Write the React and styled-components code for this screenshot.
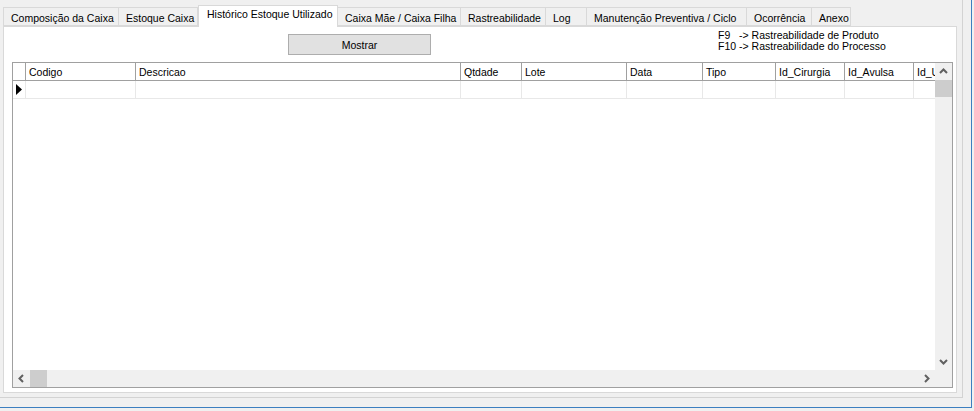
import React from "react";
import styled, { createGlobalStyle } from "styled-components";

const GlobalStyle = createGlobalStyle`
  html, body {
    margin: 0;
    padding: 0;
    background: #f0f0f0;
  }
  body {
    font-family: "Liberation Sans", Arial, sans-serif;
    font-size: 10.5px;
    color: #000;
  }
  * {
    box-sizing: border-box;
  }
`;

const Window = styled.div`
  width: 972px;
  height: 408px;
  border-right: 1px solid #3c7fc0;
  border-bottom: 1px solid #3c7fc0;
  background: #f0f0f0;
`;

const Frame = styled.div`
  width: 963px;
  height: 398px;
  padding: 5px 0 0 3px;
  border-right: 1px solid #d3d3d3;
  border-bottom: 1px solid #d3d3d3;
`;

const TabStrip = styled.div`
  display: flex;
  align-items: flex-end;
  height: 21px;
`;

const Tab = styled.div`
  width: ${(p) => p.$w}px;
  height: ${(p) => (p.$active ? 22 : 19)}px;
  margin-bottom: ${(p) => (p.$active ? -1 : 0)}px;
  padding: ${(p) => (p.$active ? "2px 0 0 8px" : "4px 0 0 7px")};
  background: ${(p) => (p.$active ? "#fff" : "#f0f0f0")};
  border: 1px solid #d9d9d9;
  border-bottom: ${(p) => (p.$active ? "none" : "1px solid #d9d9d9")};
  border-left: ${(p) => (p.$first || p.$active ? "1px solid #d9d9d9" : "none")};
  position: relative;
  z-index: ${(p) => (p.$active ? 1 : 0)};
  white-space: nowrap;
  overflow: hidden;
`;

const Panel = styled.div`
  width: 954px;
  height: 367px;
  background: #fff;
  border: 1px solid #d9d9d9;
  padding: 0 0 0 8px;
`;

const TopBar = styled.div`
  display: flex;
  align-items: flex-start;
  height: 35px;
`;

const Button = styled.div`
  width: 143px;
  height: 21px;
  margin: 7px 0 0 276px;
  background: #e1e1e1;
  border: 1px solid #adadad;
  display: flex;
  align-items: center;
  justify-content: center;
`;

const Hints = styled.div`
  margin: 3px 0 0 287px;
  line-height: 11px;
  white-space: pre;
`;

const Grid = styled.div`
  width: 941px;
  height: 326px;
  border: 1px solid #a0a0a0;
  display: flex;
  flex-direction: column;
`;

const Main = styled.div`
  flex: 1;
  display: flex;
  min-height: 0;
`;

const Columns = styled.div`
  width: 922px;
  overflow: hidden;
`;

const Row = styled.div`
  display: flex;
  height: 18px;
  border-bottom: 1px solid ${(p) => (p.$header ? "#a0a0a0" : "#e8e8e8")};
`;

const Cell = styled.div`
  flex: 0 0 ${(p) => p.$w}px;
  height: 100%;
  border-right: 1px solid ${(p) => (p.$header ? "#a0a0a0" : "#e8e8e8")};
  padding-left: 3px;
  display: flex;
  align-items: center;
  white-space: nowrap;
  overflow: hidden;
`;

const Indicator = styled.div`
  flex: 0 0 13px;
  height: 100%;
  border-right: 1px solid ${(p) => (p.$header ? "#a0a0a0" : "#e8e8e8")};
  display: flex;
  align-items: center;
  justify-content: center;
`;

const VScroll = styled.div`
  width: 17px;
  background: #f0f0f0;
  display: flex;
  flex-direction: column;
`;

const HScroll = styled.div`
  height: 17px;
  background: #f0f0f0;
  display: flex;
`;

const Arrow = styled.div`
  flex: 0 0 17px;
  height: 17px;
  display: flex;
  align-items: center;
  justify-content: center;
`;

const Thumb = styled.div`
  flex: 0 0 17px;
  height: 17px;
  background: #cdcdcd;
`;

const Spacer = styled.div`
  flex: 1;
`;

const Corner = styled.div`
  flex: 0 0 17px;
`;

const Chevron = ({ dir }) => {
  const pts = {
    up: "5,10 8.5,6.5 12,10",
    down: "5,7 8.5,10.5 12,7",
    left: "10,5 6.5,8.5 10,12",
    right: "7,5 10.5,8.5 7,12",
  }[dir];
  return (
    <svg width="17" height="17" viewBox="0 0 17 17">
      <polyline points={pts} fill="none" stroke="#606060" strokeWidth="2" />
    </svg>
  );
};

const tabs = [
  ["Composição da Caixa", 116],
  ["Estoque Caixa", 79],
  ["Histórico Estoque Utilizado", 140],
  ["Caixa Mãe / Caixa Filha", 123],
  ["Rastreabilidade", 85],
  ["Log", 41],
  ["Manutenção Preventiva / Ciclo", 160],
  ["Ocorrência", 65],
  ["Anexo", 39],
];

const columns = [
  ["Codigo", 110],
  ["Descricao", 325],
  ["Qtdade", 61],
  ["Lote", 105],
  ["Data", 76],
  ["Tipo", 73],
  ["Id_Cirurgia", 69],
  ["Id_Avulsa", 69],
  ["Id_Usuario", 69],
];

export default function App() {
  return (
    <>
      <GlobalStyle />
      <Window>
        <Frame>
          <TabStrip>
            {tabs.map(([label, w], i) => (
              <Tab key={label} $w={w} $first={i === 0} $active={i === 2}>
                {label}
              </Tab>
            ))}
          </TabStrip>
          <Panel>
            <TopBar>
              <Button>Mostrar</Button>
              <Hints>
                {"F9   -> Rastreabilidade de Produto\nF10 -> Rastreabilidade do Processo"}
              </Hints>
            </TopBar>
            <Grid>
              <Main>
                <Columns>
                  <Row $header>
                    <Indicator $header />
                    {columns.map(([label, w]) => (
                      <Cell key={label} $w={w} $header>
                        {label}
                      </Cell>
                    ))}
                  </Row>
                  <Row>
                    <Indicator>
                      <svg width="6" height="11" viewBox="0 0 6 11">
                        <polygon points="0,0 6,5.5 0,11" fill="#000" />
                      </svg>
                    </Indicator>
                    {columns.map(([label, w]) => (
                      <Cell key={label} $w={w} />
                    ))}
                  </Row>
                </Columns>
                <VScroll>
                  <Arrow>
                    <Chevron dir="up" />
                  </Arrow>
                  <Thumb />
                  <Spacer />
                  <Arrow>
                    <Chevron dir="down" />
                  </Arrow>
                </VScroll>
              </Main>
              <HScroll>
                <Arrow>
                  <Chevron dir="left" />
                </Arrow>
                <Thumb />
                <Spacer />
                <Arrow>
                  <Chevron dir="right" />
                </Arrow>
                <Corner />
              </HScroll>
            </Grid>
          </Panel>
        </Frame>
      </Window>
    </>
  );
}
